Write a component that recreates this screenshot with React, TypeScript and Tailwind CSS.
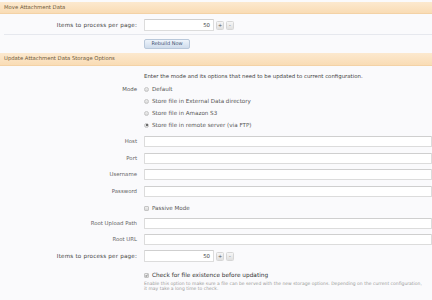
import React from 'react';

const font = { fontFamily: '"DejaVu Sans", Verdana, sans-serif' };

const SectionHeader: React.FC<{ title: string; className?: string }> = ({ title, className = '' }) => (
  <div
    className={`flex items-center px-[4px] text-[5.3px] text-[#6f5a3c] bg-gradient-to-b from-[#fce9cf] to-[#f9dcb5] border-b border-[#f3d2a6] ${className}`}
  >
    {title}
  </div>
);

const Label: React.FC<{ children: React.ReactNode; wide?: boolean }> = ({ children, wide }) => (
  <div
    className={`w-[138px] shrink-0 pr-[1px] text-right ${
      wide ? 'text-[5.6px] tracking-[0.2px] text-[#444]' : 'text-[5.4px] text-[#666]'
    }`}
  >
    {children}
  </div>
);

const TextBox: React.FC = () => (
  <div className="w-[300px] h-[11px] bg-white border border-[#dcdcdc] border-t-[#cfcfcf] rounded-[1px]" />
);

const StepButton: React.FC<{ sign: string }> = ({ sign }) => (
  <div className="w-[8px] h-[9px] rounded-[1.5px] border border-[#d6d6d6] bg-gradient-to-b from-[#f6f6f6] to-[#e0e0e0] flex items-center justify-center text-[5px] leading-none text-[#555]">
    {sign}
  </div>
);

const Spinner: React.FC = () => (
  <div className="flex items-center gap-[2px]">
    <div className="w-[70px] h-[12px] bg-white border border-[#dcdcdc] border-t-[#cfcfcf] rounded-[1px] flex items-center justify-end pr-[3px] text-[5.4px] text-[#444]">
      50
    </div>
    <StepButton sign="+" />
    <StepButton sign="-" />
  </div>
);

const Radio: React.FC<{ checked?: boolean; label: string }> = ({ checked, label }) => (
  <div className="flex items-center gap-[3px] h-[12px]">
    <div className="w-[5px] h-[5px] rounded-full border border-[#c4c4c4] bg-gradient-to-b from-[#eeeeee] to-[#d8d8d8] flex items-center justify-center">
      {checked && <div className="w-[2px] h-[2px] rounded-full bg-[#444]" />}
    </div>
    <span className="text-[5.6px] text-[#555]">{label}</span>
  </div>
);

const Check: React.FC<{ checked?: boolean }> = ({ checked }) => (
  <div className="w-[5px] h-[5px] rounded-[1px] border border-[#c4c4c4] bg-gradient-to-b from-[#f0f0f0] to-[#d8d8d8] flex items-center justify-center">
    {checked && (
      <svg viewBox="0 0 10 10" className="w-[5px] h-[5px]">
        <path d="M1.5 5.5 L4 8 L8.5 2" fill="none" stroke="#333" strokeWidth="1.8" />
      </svg>
    )}
  </div>
);

const FieldRow: React.FC<{ label: string; wide?: boolean; className?: string; children: React.ReactNode }> = ({
  label,
  wide,
  className = '',
  children,
}) => (
  <div className={`flex items-center gap-[6px] ${className}`}>
    <Label wide={wide}>{label}</Label>
    {children}
  </div>
);

export default function App() {
  return (
    <div className="w-[432px] h-[300px] overflow-hidden bg-[#fafafc]" style={font}>
      <div className="h-[2px]" />
      <SectionHeader title="Move Attachment Data" className="h-[12px]" />

      <div className="pt-[5px] pb-[3px] border-b border-[#e6e8ee] ml-[4px]">
        <div className="flex items-center gap-[6px] -ml-[4px]">
          <Label wide>Items to process per page:</Label>
          <Spinner />
        </div>
      </div>

      <div className="pt-[4px] pb-[4px] pl-[144px]">
        <div className="w-[46px] h-[10px] rounded-[2px] border border-[#b9c8da] bg-gradient-to-b from-[#eef4fb] to-[#cfdcec] flex items-center justify-center text-[5px] text-[#3c5070]">
          Rebuild Now
        </div>
      </div>

      <SectionHeader title="Update Attachment Data Storage Options" className="h-[13px]" />

      <div className="pl-[144px] pt-[6px] h-[16px] text-[5.4px] text-[#444] whitespace-nowrap">
        Enter the mode and its options that need to be updated to current configuration.
      </div>

      <div className="flex gap-[6px] mt-[1px]">
        <div className="w-[138px] shrink-0 pr-[1px] text-right text-[5.4px] text-[#555] h-[12px] leading-[12px]">Mode</div>
        <div className="flex flex-col">
          <Radio label="Default" />
          <Radio label="Store file in External Data directory" />
          <Radio label="Store file in Amazon S3" />
          <Radio checked label="Store file in remote server (via FTP)" />
        </div>
      </div>

      <FieldRow label="Host" className="mt-[5px]">
        <TextBox />
      </FieldRow>
      <FieldRow label="Port" className="mt-[6px]">
        <TextBox />
      </FieldRow>
      <FieldRow label="Username" className="mt-[5px]">
        <TextBox />
      </FieldRow>
      <FieldRow label="Password" className="mt-[6px]">
        <TextBox />
      </FieldRow>

      <div className="pl-[144px] mt-[7px] flex items-center gap-[3px] h-[8px]">
        <Check />
        <span className="text-[5.6px] text-[#555]">Passive Mode</span>
      </div>

      <FieldRow label="Root Upload Path" className="mt-[6px]">
        <TextBox />
      </FieldRow>
      <FieldRow label="Root URL" className="mt-[5px]">
        <TextBox />
      </FieldRow>
      <FieldRow label="Items to process per page:" wide className="mt-[5px]">
        <Spinner />
      </FieldRow>

      <div className="pl-[144px] mt-[9px] flex items-center gap-[3px] h-[8px]">
        <Check checked />
        <span className="text-[5.8px] text-[#333]">Check for file existence before updating</span>
      </div>

      <div className="pl-[144px] mt-[2px] text-[4.5px] leading-[5px] text-[#9a9a9a] whitespace-nowrap">
        <div>Enable this option to make sure a file can be served with the new storage options. Depending on the current configuration,</div>
        <div>it may take a long time to check.</div>
      </div>
    </div>
  );
}
